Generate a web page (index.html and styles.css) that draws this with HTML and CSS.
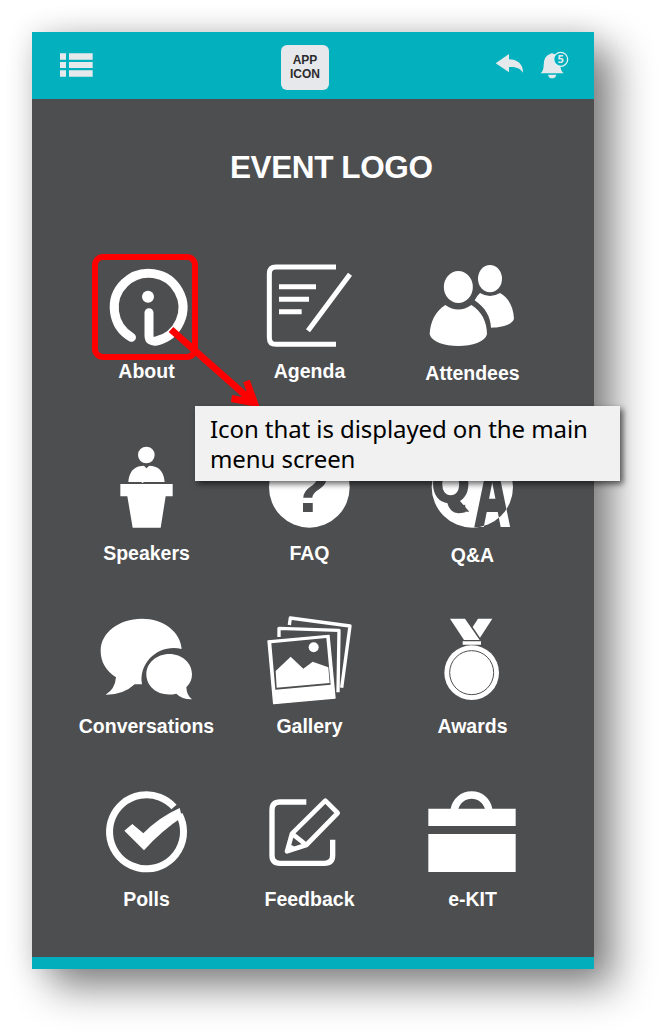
FILE: index.html
```
<!DOCTYPE html>
<html lang="en">
<head>
<meta charset="utf-8">
<title>Event app menu</title>
<link rel="stylesheet" href="styles.css">
</head>
<body>
<main class="phone">
  <header class="topbar">
    <svg class="menu-icon" viewBox="120 99 99 72"><path d="M120 100h18v19h-18zM147 100h71v19h-71zM120 126h18v18h-18zM147 126h71v18h-71zM120 151h18v19h-18zM147 151h71v19h-71z"/></svg>
    <div class="app-icon">APP<br>ICON</div>
    <svg class="bar-icon" viewBox="495 90 90 90"><path d="M497 130L537 102V118C562 118 580 133 579 158C570 144 557 140 537 141V157Z"/></svg>
    <svg class="bar-icon bell" viewBox="630 90 90 90"><path d="M632 160Q641 151 641 136Q641 108 660 102Q666 97 672 102Q690 108 691 136Q691 151 701 160ZM654 164H679Q677 175 666 175Q656 175 654 164Z"/><circle class="badge" cx="692" cy="118" r="21"/><text class="badge-text" x="692" y="129">5</text></svg>
  </header>
  <section class="screen">
    <h1 class="event-logo">EVENT LOGO</h1>
    <div class="grid">
      <div class="tile">
        <svg class="icon" viewBox="18 30 363 300"><path class="line" stroke-width="27" stroke-linecap="round" stroke-linejoin="round" d="M154.500 277A103 103 0 1 1 229 288Q207 291 207 272V203"/><circle cx="204" cy="155" r="18"/></svg>
        <span class="label">About</span>
      </div>
      <div class="tile">
        <svg class="icon" viewBox="-3 15 363 300"><path class="line" stroke-width="15" d="M258 51H78Q58 51 58 71V263Q58 283 78 283H258M87 110H198M87 148H177M87 185H155M300 73L174 242"/></svg>
        <span class="label">Agenda</span>
      </div>
      <div class="tile">
        <svg class="icon" viewBox="486 15 363 300"><ellipse cx="625" cy="111" rx="43.500" ry="48"/><ellipse cx="720" cy="86" rx="36" ry="41"/><path d="M586 165Q625 192 664 165C695 184 711 215 711 253C705 276 667 288 625 288C583 288 545 276 539 253C541 215 556 184 586 165ZM690 129Q720 147 750 129C775 142 790 170 792 206C787 224 756 233 723 233C721 200 707 174 674 151Q680 138 690 129Z"/></svg>
        <span class="label low">Attendees</span>
      </div>

      <div class="tile">
        <svg class="icon" viewBox="-12 111 363 300"><circle cx="169" cy="165" r="25"/><path d="M115 246C117 220 128 201 154 198L162 197L169 205L178 197L186 198C211 202 222 220 224 246H162L157 249L154 246ZM91 252H248V289H227L212 383H128L112 289H91Z"/></svg>
        <span class="label">Speakers</span>
      </div>
      <div class="tile">
        <svg class="icon" viewBox="477 111 363 300"><circle cx="658" cy="262" r="121"/><text class="cut question" x="658" y="335">?</text></svg>
        <span class="label">FAQ</span>
      </div>
      <div class="tile">
        <svg class="icon" viewBox="186 126 363 300">
          <defs><clipPath id="disc"><circle cx="367" cy="276" r="122"/></clipPath></defs>
          <g class="letters bright"><text transform="translate(374 391) scale(.57 1)">A</text></g>
          <circle cx="367" cy="276" r="122"/>
          <g class="letters cut" clip-path="url(#disc)"><text transform="translate(374 391) scale(.57 1)">A</text><text transform="translate(247 322) scale(.56 .6)">Q</text><path d="M298 308L328 316L358 350H322Z"/></g>
        </svg>
        <span class="label low">Q&amp;A</span>
      </div>

      <div class="tile">
        <svg class="icon" viewBox="48 15 363 300"><path d="M215 41C281 41 332 81 335 132C270 116 205 169 216 238H194Q160 270 107 269Q135 253 138 217C108 197 92 171 92 137C92 83 147 41 215 41ZM298 147C336 147 366 174 366 208Q366 231 349 247Q350 272 366 283Q337 284 319 266C269 278 229 248 229 208C229 174 260 147 298 147Z"/></svg>
        <span class="label">Conversations</span>
      </div>
      <div class="tile">
        <svg class="icon" viewBox="-3 15 363 300"><g class="line" stroke-width="10" stroke-linejoin="round"><path d="M118 60L121 39L300 63L275 248"/><path d="M87 96V70L267 76L264 262"/></g><path class="paper" d="M54 108L237 91L255 279L71 296Z"/><path class="cut" d="M64 115L229 99L242 239L76 254Z"/><path d="M77 198L122 155L160 191L188 170L235 187L239 234L80 248Z"/><circle cx="191" cy="127" r="15"/></svg>
        <span class="label">Gallery</span>
      </div>
      <div class="tile">
        <svg class="icon" viewBox="486 15 363 300"><path d="M600 41H645L689 105H642ZM684 41H727L690 98L668 66ZM638 109H693V119H638Z"/><circle cx="665" cy="203" r="82"/><circle class="groove" cx="665" cy="203" r="66"/></svg>
        <span class="label">Awards</span>
      </div>

      <div class="tile">
        <svg class="icon" viewBox="-12 9 363 300"><path class="line" stroke-width="21" d="M252 81A111 111 0 1 0 268 104"/><path d="M103 152L127 132L160 160Q205 113 269 84L276 112Q214 153 162 211Z"/></svg>
        <span class="label">Polls</span>
      </div>
      <div class="tile">
        <svg class="icon" viewBox="477 9 363 300"><path class="line" stroke-width="16" d="M649 66H570Q546 66 546 90V226Q546 250 570 250H703Q728 250 728 226V179"/><path class="line" stroke-width="14" stroke-linejoin="round" d="M706 62L743 99L649 195L591 214L606 161ZM606 161L649 195M595 198L613 207"/></svg>
        <span class="label">Feedback</span>
      </div>
      <div class="tile">
        <svg class="icon" viewBox="36 9 363 300"><path d="M85 86H152C158 56 183 34 215 34C247 34 272 56 277 86H347V138H85ZM175 86H255C248 67 234 56 215 56C196 56 182 67 175 86ZM85 162H347V276H85Z" fill-rule="evenodd"/></svg>
        <span class="label">e-KIT</span>
      </div>
    </div>
  </section>
</main>
<div class="highlight"></div>
<svg class="arrow" viewBox="160 320 110 90"><path d="M171 329.500L253 402M246.500 381L254.500 403L231.500 398.500"/></svg>
<div class="callout">Icon that is displayed on the main<br>menu screen</div>
</body>
</html>
```
FILE: styles.css
```
* { box-sizing: border-box; }
body {
  margin: 0;
  width: 660px;
  height: 1034px;
  padding: 32px;
  background: #fff;
  overflow: hidden;
  position: relative;
  font-family: "Liberation Sans", Arial, sans-serif;
}
.phone {
  width: 562px;
  height: 937px;
  background: #4d4e50;
  border-bottom: 12px solid #02aebc;
  box-shadow: 20px 18px 38px rgba(0, 0, 0, .48), 0 0 26px rgba(0, 0, 0, .12);
}
.topbar {
  height: 67px;
  padding: 0 0 1px 28px;
  display: flex;
  align-items: center;
  background: #02b0be;
  fill: #e6e9ec;
}
.menu-icon { width: 33px; height: 24px; margin-right: 188px; }
.app-icon {
  width: 48px;
  height: 45px;
  margin: 5px 166px 0 0;
  padding-top: 8px;
  border-radius: 6px;
  background: #e6e8eb;
  color: #2d2b2e;
  font-size: 12px;
  line-height: 14px;
  font-weight: bold;
  text-align: center;
}
.bar-icon { width: 30px; height: 30px; }
.bell { margin-left: 15px; }
.badge { fill: #02b0be; stroke: #dff4f6; stroke-width: 4px; }
.badge-text { font: bold 33px "Open Sans", sans-serif; text-anchor: middle; }
.screen { padding: 49px 0 0 33px; }
.event-logo {
  margin: 0 0 69px;
  width: 529px;
  padding-left: 165px;
  color: #fff;
  font-size: 31.500px;
  line-height: 38px;
  letter-spacing: -.4px;
}
.grid {
  display: grid;
  grid-template-columns: repeat(3, 163px);
  grid-template-rows: 182px 173px 173px 128px;
}
.tile { display: flex; flex-direction: column; align-items: center; }
.icon { width: 121px; height: 100px; flex: none; fill: #fff; }
.line { fill: none; stroke: #fff; }
.cut { fill: #4d4e50; }
.question { font: bold 207px "Liberation Sans", sans-serif; text-anchor: middle; }
.letters { font: bold 255px "Liberation Sans", sans-serif; stroke-width: 12px; }
.letters.bright { stroke: #fff; }
.letters.cut { stroke: #4d4e50; }
.letters path { stroke: none; }
.groove { fill: none; stroke: #4d4e50; stroke-width: 3px; }
.paper { stroke: #fff; stroke-width: 4px; stroke-linejoin: round; }
.label {
  margin-top: 4px;
  color: #fff;
  font-size: 19.500px;
  line-height: 24px;
  font-weight: bold;
}
.low { margin-top: 6px; }
.highlight {
  position: absolute;
  left: 92px;
  top: 254px;
  width: 106px;
  height: 106px;
  border: 6px solid #fe0000;
  border-radius: 11px;
}
.arrow {
  position: absolute;
  left: 160px;
  top: 320px;
  width: 110px;
  height: 90px;
  fill: none;
  stroke: #fe0000;
  stroke-width: 7px;
}
.callout {
  position: absolute;
  left: 195px;
  top: 406px;
  width: 425px;
  height: 75px;
  padding: 8px 0 0 15px;
  background: #f1f1f1;
  box-shadow: 3px 3px 6px rgba(0, 0, 0, .6);
  color: #000;
  font: 24px/30px "Noto Sans", sans-serif;
  letter-spacing: -.08px;
  white-space: nowrap;
}
```
